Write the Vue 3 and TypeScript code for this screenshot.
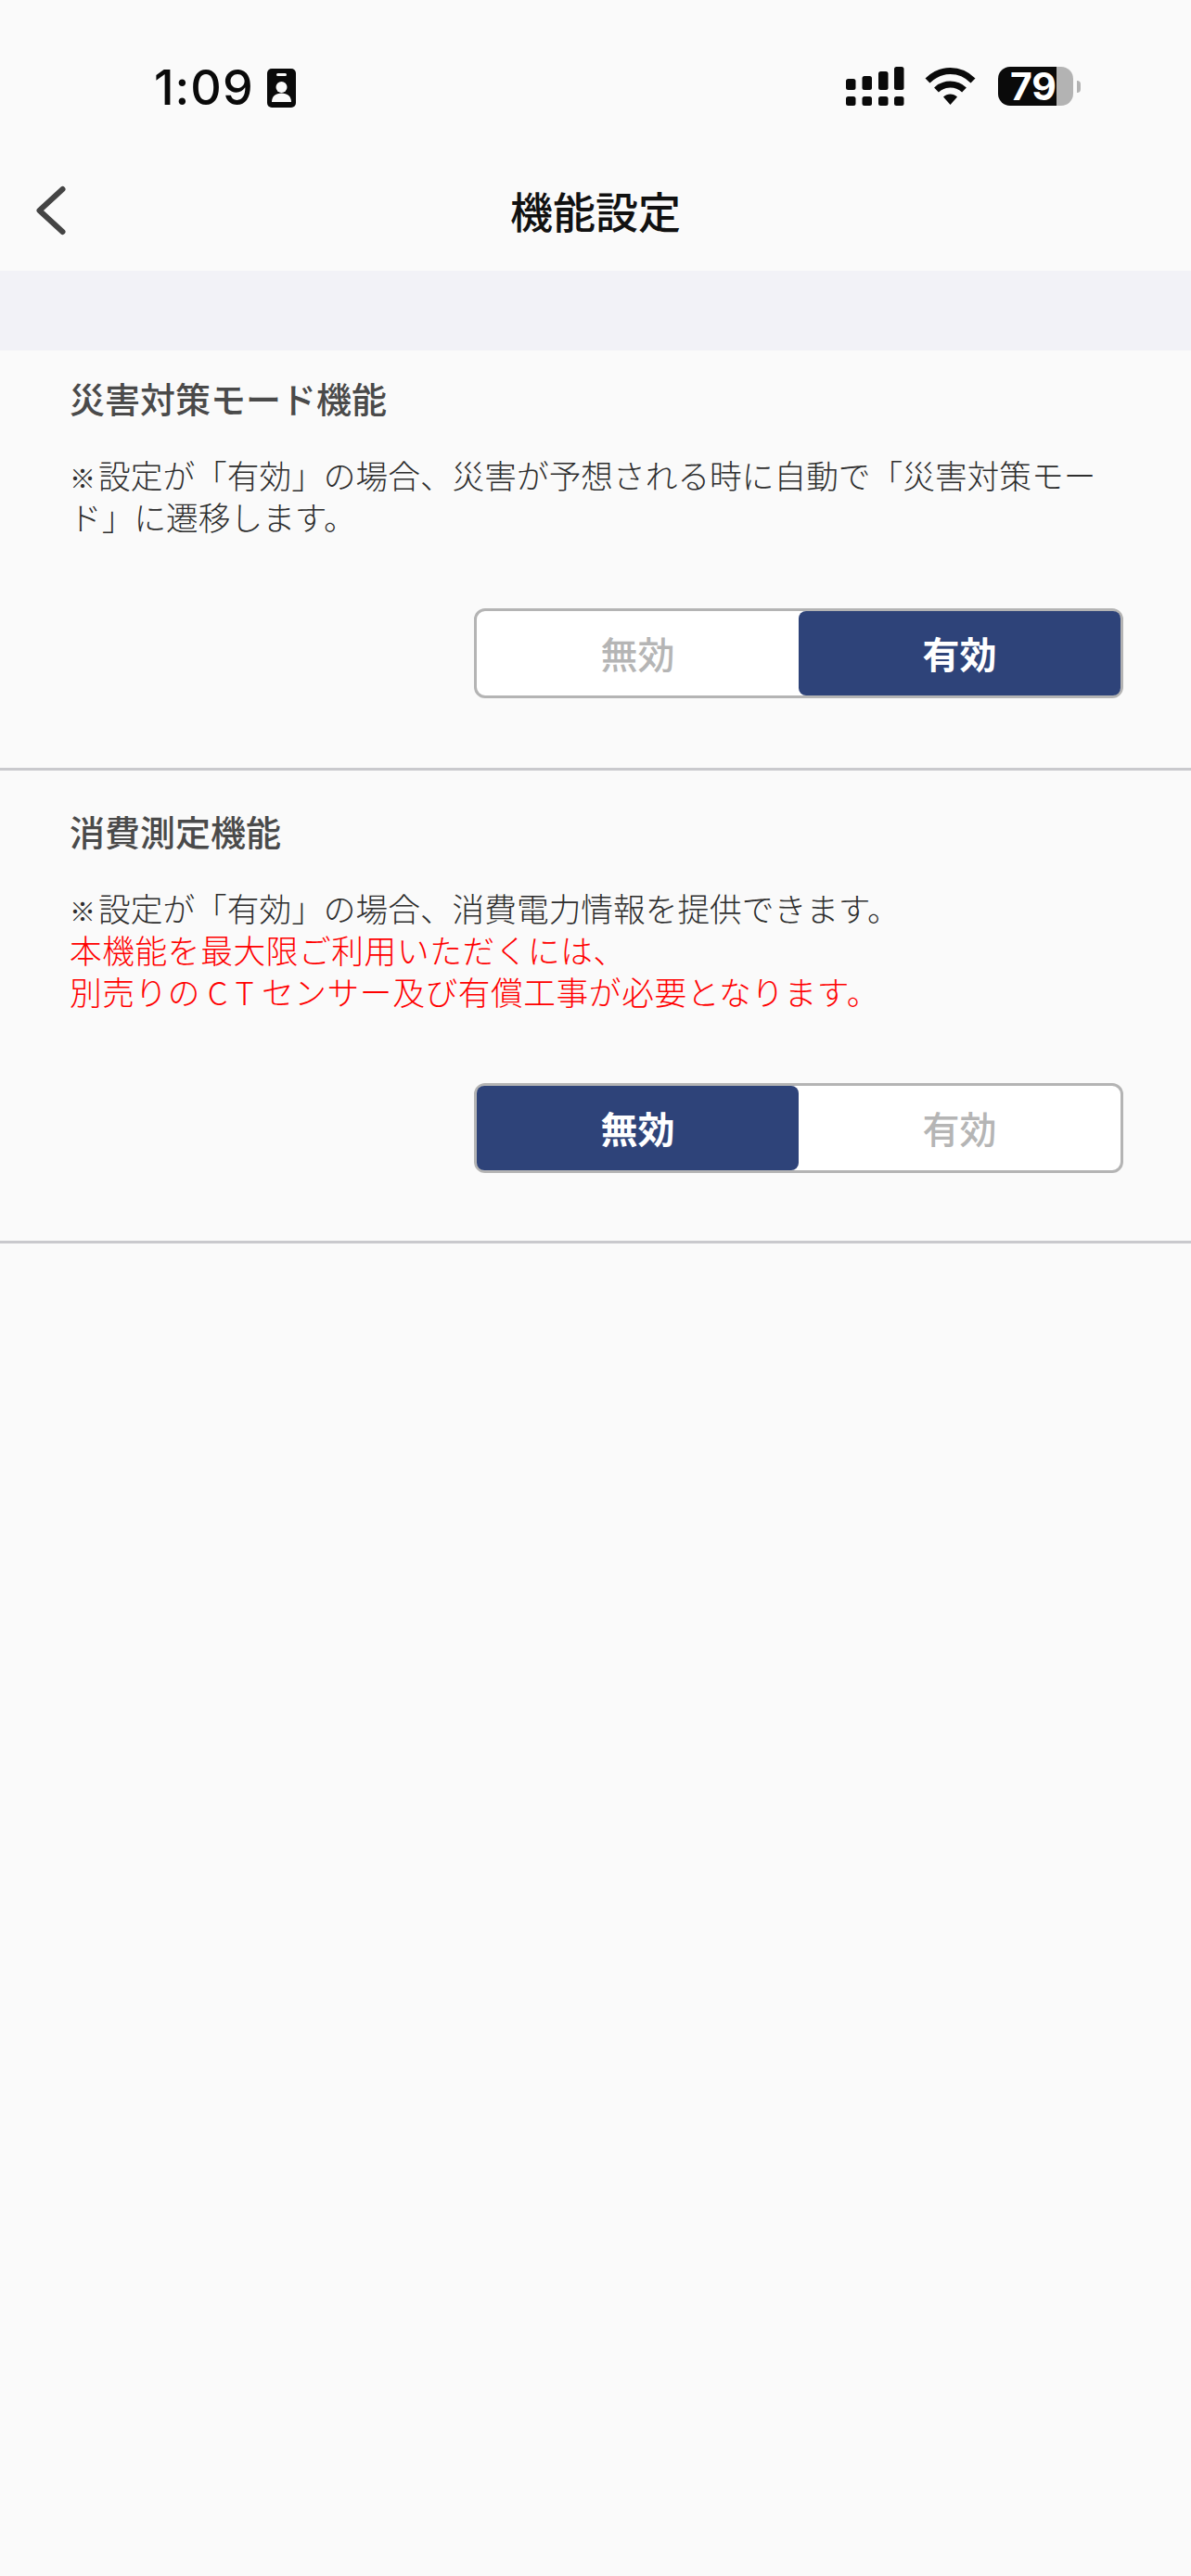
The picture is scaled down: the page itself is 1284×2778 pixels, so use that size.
<template>
  <div class="screen">
    <header class="status-bar">
      <div class="status-left">
        <span class="time">1:09</span>
        <svg class="badge-icon" width="31" height="42" viewBox="0 0 31 42">
          <rect width="31" height="42" rx="5" fill="#0a0a0a" />
          <rect x="10" y="5" width="11" height="3" rx="1.5" fill="#fafafa" />
          <circle cx="15.5" cy="20" r="6" fill="#fafafa" />
          <path d="M5 36c0-6 4-9.500 10.500-9.500S26 30 26 36z" fill="#fafafa" />
        </svg>
      </div>
      <div class="status-right">
        <svg class="signal-icon" width="63" height="42" viewBox="0 0 63 42">
          <rect v-for="bar in signalBars" :key="bar.x + '-' + bar.y" :x="bar.x" :y="bar.y" width="10.500" :height="bar.h" rx="2.500" fill="#0a0a0a" />
        </svg>
        <svg class="wifi-icon" width="55" height="40" viewBox="0 0 55 40">
          <path d="M3 14C17 0 38 0 52 14" fill="none" stroke="#0a0a0a" stroke-width="7" />
          <path d="M12.500 24C21 16 34 16 42.500 24" fill="none" stroke="#0a0a0a" stroke-width="7" />
          <path d="M27.500 40L20 31.500C24 27.500 31 27.500 35 31.500Z" fill="#0a0a0a" />
        </svg>
        <div class="battery">
          <div class="battery-body"><span>79</span></div>
          <div class="battery-nub"></div>
        </div>
      </div>
    </header>

    <nav class="nav-bar">
      <button class="back-btn" type="button" aria-label="戻る">
        <svg width="36" height="58" viewBox="0 0 36 58">
          <path d="M31.500 6L6.500 29L31.500 52" fill="none" stroke="#444" stroke-width="6" stroke-linecap="round" stroke-linejoin="round" />
        </svg>
      </button>
      <h1 class="nav-title">機能設定</h1>
      <div></div>
    </nav>

    <div class="band"></div>

    <section v-for="item in items" :key="item.title" class="setting">
      <h2 class="setting-title">{{ item.title }}</h2>
      <p class="setting-note"><span class="mark">※</span>{{ item.note }}</p>
      <p v-for="line in item.warnings" :key="line" class="setting-warning">{{ line }}</p>
      <div class="toggle">
        <button type="button" class="segment" :class="{ active: !item.enabled }" @click="item.enabled = false">無効</button>
        <button type="button" class="segment" :class="{ active: item.enabled }" @click="item.enabled = true">有効</button>
      </div>
    </section>
  </div>
</template>

<script setup lang="ts">
import { reactive } from 'vue'

interface SettingItem {
  title: string
  note: string
  warnings: string[]
  enabled: boolean
}

const signalBars = [
  { x: 0, y: 13, h: 12 },
  { x: 17.5, y: 10, h: 15 },
  { x: 35, y: 5, h: 20 },
  { x: 52, y: 0, h: 25 },
  { x: 0, y: 32, h: 10 },
  { x: 17.5, y: 32, h: 10 },
  { x: 35, y: 32, h: 10 },
  { x: 52, y: 32, h: 10 }
]

const items = reactive<SettingItem[]>([
  {
    title: '災害対策モード機能',
    note: '設定が「有効」の場合、災害が予想される時に自動で「災害対策モード」に遷移します。',
    warnings: [],
    enabled: true
  },
  {
    title: '消費測定機能',
    note: '設定が「有効」の場合、消費電力情報を提供できます。',
    // thin spaces: the Latin letters sit wider apart than the kana around them
    warnings: ['本機能を最大限ご利用いただくには、', '別売りの\u2009C\u2009T\u2009センサー及び有償工事が必要となります。'],
    enabled: false
  }
])
</script>

<style>
html,
body {
  margin: 0;
  background: #fafafa;
}
</style>

<style scoped>
.screen {
  min-height: 2778px;
  background: #fafafa;
  font-family: "Noto Sans CJK JP", "Liberation Sans", sans-serif;
}

.status-bar {
  height: 162px;
  box-sizing: border-box;
  padding: 72px 119px 0 166px;
  display: flex;
  justify-content: space-between;
  align-items: flex-start;
}

.status-left {
  display: flex;
  align-items: center;
  gap: 14px;
}

.time {
  font-family: Inter, "Liberation Sans", sans-serif;
  font-size: 52px;
  font-weight: 500;
  letter-spacing: 1px;
  line-height: 46px;
  color: #0a0a0a;
}

.status-right {
  display: flex;
  align-items: flex-start;
  gap: 22px;
}

.wifi-icon {
  margin-top: 1px;
}

.battery {
  display: flex;
  align-items: center;
  gap: 4px;
  margin-left: 2px;
}

.battery-body {
  width: 81px;
  height: 42px;
  box-sizing: border-box;
  padding-right: 18px;
  border-radius: 13px;
  background: linear-gradient(to right, #0a0a0a 63px, #b3b3b3 63px);
  display: flex;
  align-items: center;
  justify-content: flex-end;
  font-family: Inter, "Liberation Sans", sans-serif;
  font-size: 41px;
  font-weight: 700;
  color: #fff;
}

.battery-nub {
  width: 4px;
  height: 13px;
  border-radius: 0 4px 4px 0;
  background: #b3b3b3;
}

.nav-bar {
  height: 130px;
  display: grid;
  grid-template-columns: 1fr auto 1fr;
  align-items: center;
}

.back-btn {
  width: 36px;
  height: 58px;
  margin-left: 36px;
  padding: 0;
  border: none;
  background: none;
  cursor: pointer;
}

.nav-title {
  margin: 0 0 3px;
  font-size: 46px;
  font-weight: 500;
  line-height: 60px;
  color: #111;
}

.band {
  height: 86px;
  background: #f2f2f7;
}

.setting {
  padding: 25px 73px 75px 75px;
  border-bottom: 3px solid #c9c9cd;
  display: flex;
  flex-direction: column;
}

.setting + .setting {
  padding-top: 39px;
  padding-bottom: 73px;
}

.setting-title {
  margin: 0 0 35px;
  font-size: 38px;
  font-weight: 500;
  line-height: 52px;
  color: #4a4a4a;
}

.setting-note,
.setting-warning {
  margin: 0;
  font-size: 34.7px;
  font-weight: 300;
  line-height: 45px;
  color: #2e2e2e;
}

.setting-note .mark {
  margin-right: 3px;
  font-size: 28px;
  font-weight: 400;
  line-height: 0;
}

.setting-warning {
  letter-spacing: 0.6px;
  color: #ff0000;
}

.toggle {
  align-self: flex-end;
  width: 700px;
  height: 97px;
  margin-top: 76px;
  box-sizing: border-box;
  border: 3px solid #b4b4b4;
  border-radius: 12px;
  background: #fff;
  display: flex;
}

.segment {
  flex: 1;
  padding: 0 0 2px;
  border: none;
  border-radius: 8px;
  background: transparent;
  font-family: inherit;
  font-size: 40px;
  font-weight: 500;
  color: #b5b5b5;
  cursor: pointer;
}

.segment.active {
  background: #2e4379;
  color: #fff;
  font-weight: 700;
}
</style>
